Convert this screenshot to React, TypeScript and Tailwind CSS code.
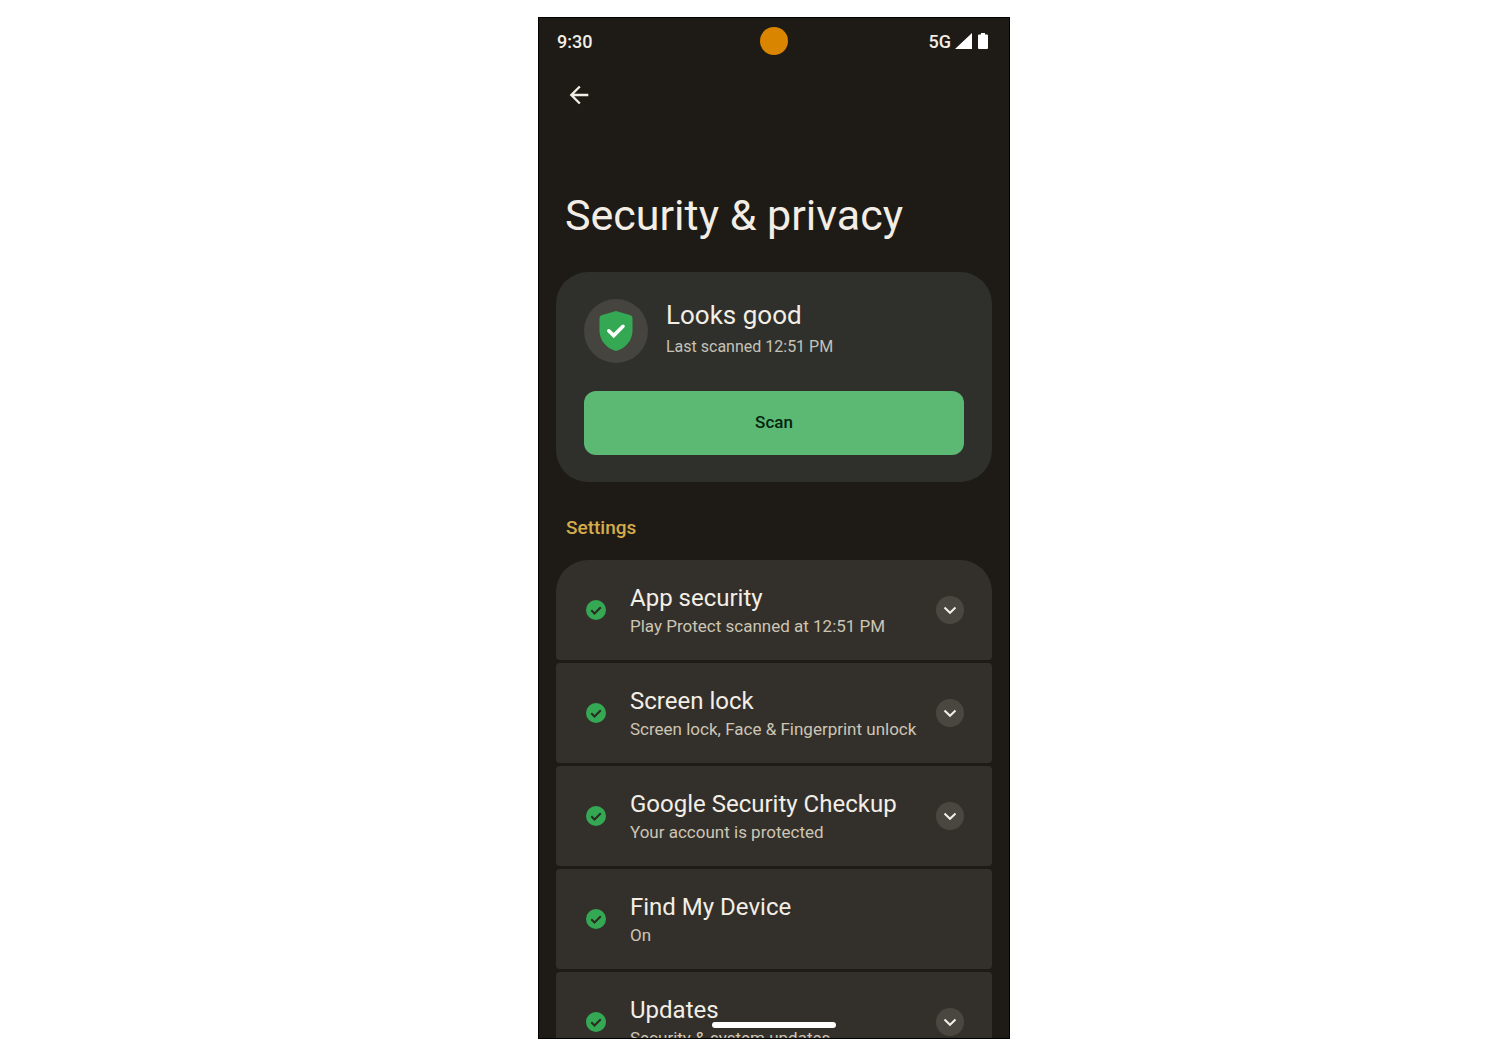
import { useState } from 'react';

type SettingItem = {
  title: string;
  summary: string;
  expandable: boolean;
};

const settings: SettingItem[] = [
  { title: 'App security', summary: 'Play Protect scanned at 12:51 PM', expandable: true },
  { title: 'Screen lock', summary: 'Screen lock, Face & Fingerprint unlock', expandable: true },
  { title: 'Google Security Checkup', summary: 'Your account is protected', expandable: true },
  { title: 'Find My Device', summary: 'On', expandable: false },
  { title: 'Updates', summary: 'Security & system updates', expandable: true },
];

function BackIcon() {
  return (
    <svg viewBox="0 0 24 24" className="size-7" fill="currentColor" aria-hidden="true">
      <path d="M20 11H7.83l5.59-5.59L12 4l-8 8 8 8 1.41-1.41L7.83 13H20v-2z" />
    </svg>
  );
}

function SignalIcon() {
  return (
    <svg viewBox="0 0 17 16" className="h-4 w-[17px]" fill="#fff" aria-hidden="true">
      <path d="M0 16 17 0v16z" />
    </svg>
  );
}

function BatteryIcon() {
  return (
    <svg viewBox="0 0 10 16" className="h-4 w-2.5" fill="#fff" aria-hidden="true">
      <path d="M3 0h4v1.6h2q1 0 1 1V15q0 1-1 1H1q-1 0-1-1V2.6q0-1 1-1h2z" />
    </svg>
  );
}

function ShieldIcon() {
  return (
    <svg viewBox="0 0 34 42" className="h-[42px] w-[34px]" aria-hidden="true">
      <path
        d="M17 1 31.5 5.3Q33.5 6 33.5 8v12.5C33.5 30.5 26.5 38.5 17 41 7.500 38.500.5 30.500.5 20.500V8q0-2 2-2.700z"
        fill="#34a853"
      />
      <path
        d="m9.800 20.800 4.900 4.800 9.300-9.300"
        fill="none"
        stroke="#fff"
        strokeWidth="3.600"
        strokeLinecap="round"
        strokeLinejoin="miter"
      />
    </svg>
  );
}

function CheckIcon() {
  return (
    <svg viewBox="0 0 24 24" className="size-6 shrink-0" aria-hidden="true">
      <circle cx="12" cy="12" r="10" fill="#34a853" />
      <path d="m7.300 12.300 3.200 3.200 6.300-6.300" fill="none" stroke="#2b2b22" strokeWidth="2" />
    </svg>
  );
}

function ChevronIcon() {
  return (
    <svg viewBox="0 0 14 14" className="size-3.5" fill="none" stroke="currentColor" strokeWidth="2" aria-hidden="true">
      <path d="m1.500 4.500 5.500 5.300 5.500-5.300" />
    </svg>
  );
}

function StatusBar() {
  return (
    <div className="grid h-[46px] shrink-0 grid-cols-3 items-center px-[18px] text-[18px] font-medium">
      <span>9:30</span>
      <span className="size-7 justify-self-center rounded-full bg-[#d98500]" />
      <div className="flex items-center justify-end pr-[3px]">
        <span>5G</span>
        <span className="ml-1"><SignalIcon /></span>
        <span className="ml-1.5"><BatteryIcon /></span>
      </div>
    </div>
  );
}

function ScanCard() {
  return (
    <section className="flex flex-col gap-7 rounded-[32px] bg-[#2f302b] px-7 py-[27px]">
      <div className="flex items-center gap-[18px]">
        <div className="flex size-16 shrink-0 items-center justify-center rounded-full bg-[#46443f]">
          <ShieldIcon />
        </div>
        <div className="pb-1">
          <h2 className="text-[26px] leading-8">Looks good</h2>
          <p className="mt-1 text-[16px] leading-6 text-[#c5c2b8]">Last scanned 12:51 PM</p>
        </div>
      </div>
      <button type="button" className="h-16 rounded-xl bg-[#5bb974] text-[17px] font-medium text-[#06250f]">
        Scan
      </button>
    </section>
  );
}

function SettingRow({ item }: { item: SettingItem }) {
  const [open, setOpen] = useState(false);

  return (
    <li className="flex min-h-[100px] shrink-0 items-center rounded-[4px] bg-[#33302b] px-7 first:rounded-t-[32px]">
      <CheckIcon />
      <div className="ml-[22px] flex-1 whitespace-nowrap">
        <h3 className="text-[24px] leading-8">{item.title}</h3>
        <p className="text-[17px] leading-6 text-[#cdc5b4]">{item.summary}</p>
      </div>
      {item.expandable && (
        <button
          type="button"
          aria-label={`Expand ${item.title}`}
          aria-expanded={open}
          onClick={() => setOpen(!open)}
          className="flex size-7 shrink-0 items-center justify-center rounded-full bg-[#4a4640]"
        >
          <ChevronIcon />
        </button>
      )}
    </li>
  );
}

export default function App() {
  return (
    <div className="flex h-screen justify-center bg-white pt-[17px] pb-[5px] pl-12 font-[Roboto,sans-serif] text-[#f3eee5]">
      <main className="relative flex w-full max-w-[472px] flex-col overflow-hidden border border-black bg-[#1e1b16]">
        <StatusBar />
        <header className="px-[26px] pt-[17px]">
          <button type="button" aria-label="Back" className="flex size-7 items-center justify-center">
            <BackIcon />
          </button>
          <h1 className="mt-20 text-[43px] leading-[52px] whitespace-nowrap">Security &amp; privacy</h1>
        </header>
        <div className="flex flex-col px-[17px] pt-[31px]">
          <ScanCard />
          <h2 className="mt-[33px] mb-[19px] pl-2.5 text-[19px] leading-[26px] font-medium text-[#d5ab4b]">Settings</h2>
          <ul className="flex flex-col gap-[3px]">
            {settings.map((item) => (
              <SettingRow key={item.title} item={item} />
            ))}
          </ul>
        </div>
        <div className="absolute bottom-2.5 left-1/2 h-1.5 w-[124px] -translate-x-1/2 rounded-full bg-white" />
      </main>
    </div>
  );
}
